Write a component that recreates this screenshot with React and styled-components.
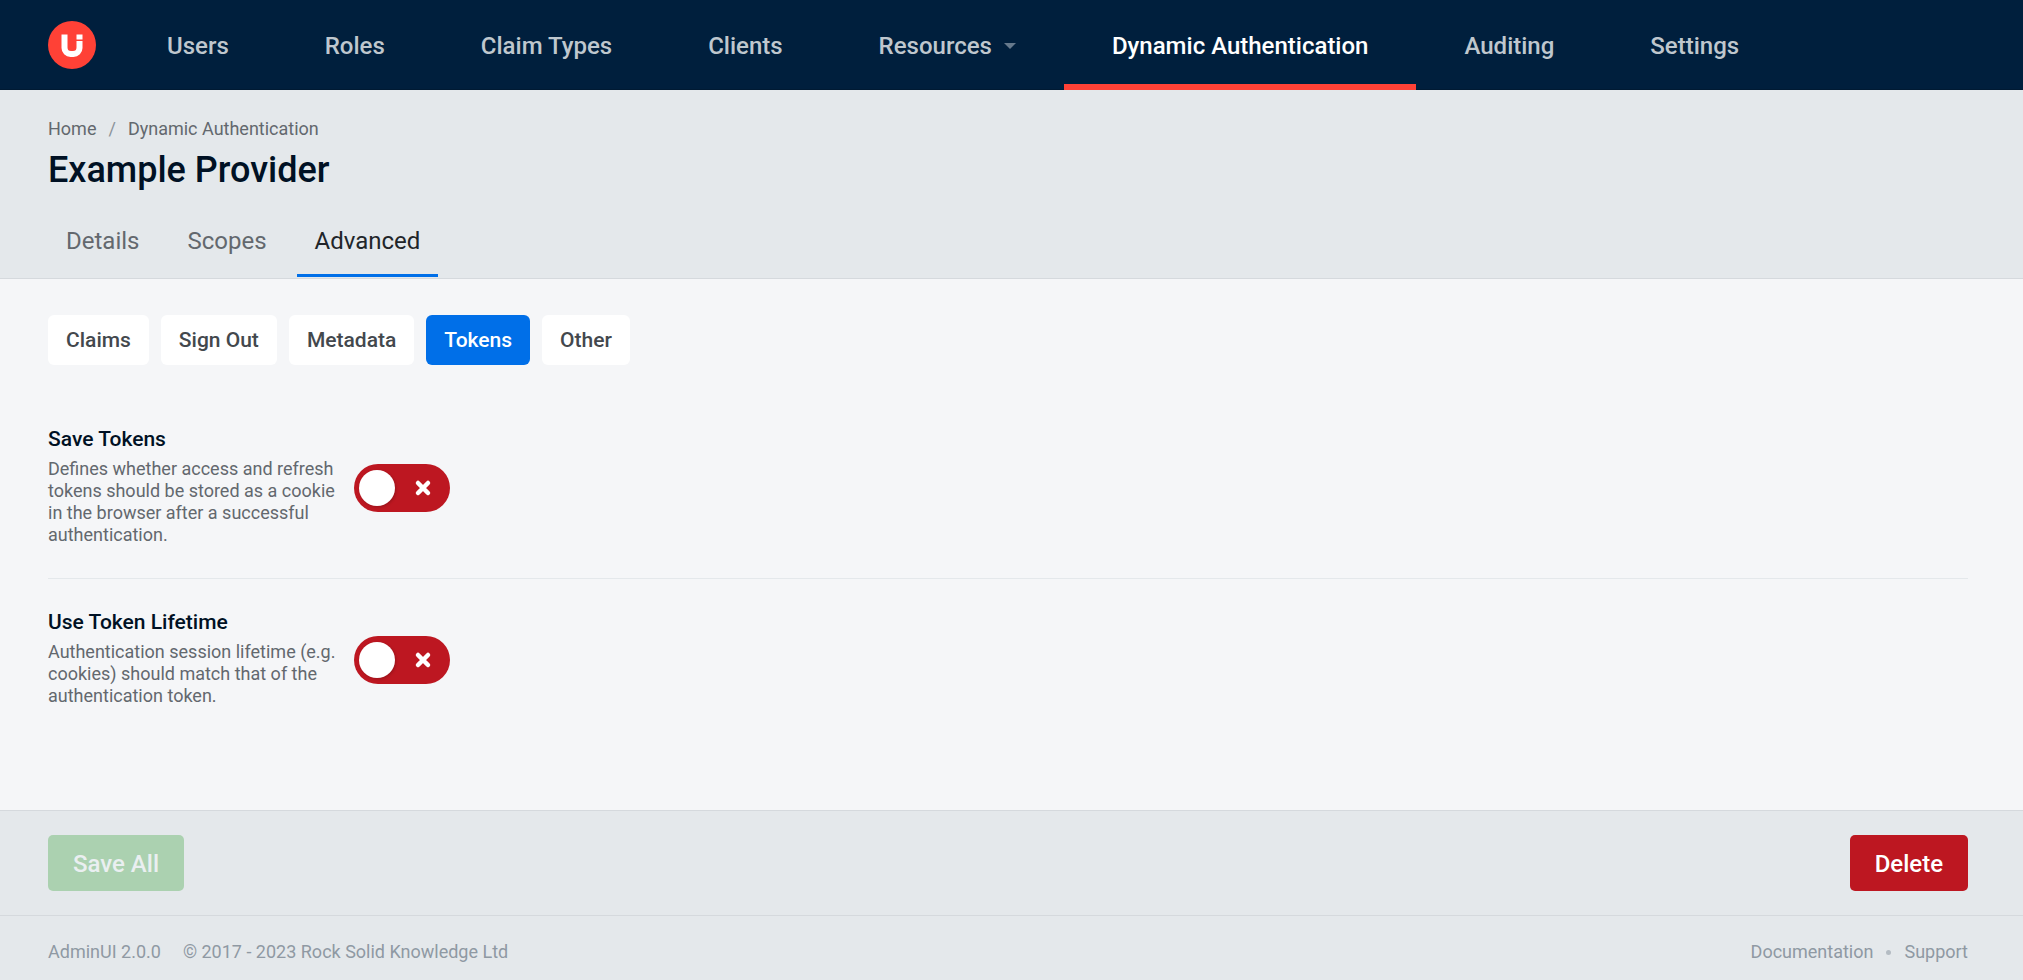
import React, { useState } from 'react';
import styled, { createGlobalStyle } from 'styled-components';

const GlobalStyle = createGlobalStyle`
  *, *::before, *::after { box-sizing: border-box; }
  body {
    margin: 0;
    font-family: Roboto, "Liberation Sans", sans-serif;
    background: #f5f6f8;
    color: #001124;
  }
  button { font-family: inherit; border: 0; margin: 0; cursor: pointer; }
  a { text-decoration: none; }
`;

const Page = styled.div`
  min-height: 100vh;
  display: flex;
  flex-direction: column;
`;

const TopBar = styled.header`
  display: flex;
  align-items: center;
  min-height: 90px;
  padding-left: 48px;
  background: #001f3d;
  border-bottom: 1px solid #001a33;
`;

const HomeLink = styled.a`
  display: flex;
  margin-right: 23px;
`;

const MainNav = styled.nav`
  display: flex;
  align-self: stretch;
  margin-bottom: -1px;
`;

const navItem = `
  display: flex;
  align-items: center;
  gap: 12px;
  padding: 8px 48px 0;
  font-size: 24px;
  font-weight: 500;
  white-space: nowrap;
  background: none;
`;

const NavLink = styled.a`
  ${navItem}
  color: ${(p) => (p.$active ? '#fff' : '#bfc7ce')};
  border-bottom: 6px solid ${(p) => (p.$active ? '#ff4136' : 'transparent')};
`;

const NavMenuButton = styled.button`
  ${navItem}
  color: #bfc7ce;
  border-bottom: 6px solid transparent;
`;

const PageHeader = styled.div`
  padding: 27px 55px 0 48px;
  background: #e4e8eb;
  border-bottom: 1px solid #d5d9dd;
`;

const Breadcrumb = styled.nav`
  display: flex;
  gap: 12px;
  font-size: 18px;
  line-height: 24px;
  color: #8b939a;
`;

const Crumb = styled.a`
  color: #63686e;
`;

const Title = styled.h1`
  margin: 7px 0 25px;
  font-size: 36px;
  line-height: 44px;
  font-weight: 500;
`;

const TabBar = styled.nav`
  display: flex;
  gap: 12px;
`;

const Tab = styled.a`
  padding: 10px 18px 19px;
  margin-bottom: 1px;
  font-size: 24px;
  line-height: 28px;
  color: ${(p) => (p.$active ? '#212529' : '#63686e')};
  border-bottom: 3px solid ${(p) => (p.$active ? '#006fe8' : 'transparent')};
`;

const Content = styled.main`
  flex: 1;
  padding: 36px 55px 36px 48px;
`;

const PillBar = styled.div`
  display: flex;
  flex-wrap: wrap;
  gap: 12px;
  margin-bottom: 31px;
`;

const Pill = styled.button`
  padding: 12px 18px;
  border-radius: 6px;
  font-size: 21px;
  line-height: 26px;
  font-weight: 500;
  color: ${(p) => (p.$active ? '#fff' : '#43484d')};
  background: ${(p) => (p.$active ? '#006fe8' : '#fff')};
`;

const Setting = styled.section`
  display: flex;
  align-items: center;
  gap: 18px;
  padding: 30px 0 28px;
  & + & { border-top: 1px solid #e4e8eb; }
`;

const SettingText = styled.div`
  width: 288px;
  padding-bottom: 4px;
`;

const SettingLabel = styled.label`
  display: block;
  margin-bottom: 6px;
  font-size: 21px;
  line-height: 26px;
  font-weight: 500;
`;

const SettingHelp = styled.p`
  margin: 0;
  font-size: 18px;
  line-height: 22px;
  color: #63686e;
`;

const Switch = styled.span`
  display: grid;
  flex: none;
  width: 96px;
  height: 48px;
  & > * { grid-area: 1 / 1; }
`;

const SwitchInput = styled.input`
  appearance: none;
  display: flex;
  align-items: center;
  justify-content: ${(p) => (p.checked ? 'flex-end' : 'flex-start')};
  margin: 0;
  padding: 0 5px;
  border-radius: 24px;
  background: ${(p) => (p.checked ? '#28a034' : '#bd1721')};
  cursor: pointer;
  &::before {
    content: '';
    width: 36px;
    height: 36px;
    border-radius: 50%;
    background: #fff;
    box-shadow: 1px 1px 3px rgba(0, 0, 0, 0.2);
  }
`;

const SwitchMark = styled.svg`
  align-self: center;
  justify-self: ${(p) => (p.$on ? 'start' : 'end')};
  margin: 0 18px;
  pointer-events: none;
`;

const ActionBar = styled.div`
  display: flex;
  justify-content: space-between;
  padding: 24px 55px 24px 48px;
  background: #e4e8eb;
  border-top: 1px solid #d5d9dd;
`;

const ActionButton = styled.button`
  padding: 15px 25px 13px;
  border-radius: 5px;
  font-size: 24px;
  line-height: 28px;
  font-weight: 500;
  color: #fff;
  background: ${(p) => (p.$danger ? '#bd1721' : '#2a9f3a')};
  &:disabled {
    color: #eaeff1;
    background: #abd1b0;
    cursor: default;
  }
`;

const Footer = styled.footer`
  display: flex;
  justify-content: space-between;
  padding: 24px 55px 16px 48px;
  font-size: 18px;
  line-height: 24px;
  color: #8f99a3;
  background: #e4e8eb;
  border-top: 1px solid #d5d9dd;
`;

const FooterGroup = styled.div`
  display: flex;
  align-items: center;
  gap: ${(p) => p.$gap}px;
`;

const FooterLink = styled.a`
  color: inherit;
`;

const Dot = styled.span`
  width: 5px;
  height: 5px;
  border-radius: 50%;
  background: #b4bcc3;
`;

const Logo = () => (
  <svg width="48" height="48" viewBox="0 0 48 48" aria-hidden="true">
    <circle cx="24" cy="24" r="24" fill="#ff4136" />
    <path
      d="M13.5 13.5h6v13a3.5 3.5 0 0 0 3.5 3.5h2a3.5 3.5 0 0 0 3.5-3.5V20h6v7a9 9 0 0 1-9 9h-3a9 9 0 0 1-9-9z"
      fill="#fff"
    />
    <rect x="28.5" y="13.5" width="6" height="5" fill="#fff" />
  </svg>
);

const Caret = () => (
  <svg width="12" height="6" viewBox="0 0 12 6" aria-hidden="true">
    <path d="M0 0h12L6 6z" fill="#66798c" />
  </svg>
);

const navEntries = ['Users', 'Roles', 'Claim Types', 'Clients', 'Resources', 'Dynamic Authentication', 'Auditing', 'Settings'];
const tabs = ['Details', 'Scopes', 'Advanced'];
const pills = ['Claims', 'Sign Out', 'Metadata', 'Tokens', 'Other'];
const settings = [
  {
    id: 'save-tokens',
    label: 'Save Tokens',
    help: 'Defines whether access and refresh tokens should be stored as a cookie in the browser after a successful authentication.',
  },
  {
    id: 'token-lifetime',
    label: 'Use Token Lifetime',
    help: 'Authentication session lifetime (e.g. cookies) should match that of the authentication token.',
  },
];

function SettingRow({ id, label, help }) {
  const [on, setOn] = useState(false);
  return (
    <Setting>
      <SettingText>
        <SettingLabel htmlFor={id}>{label}</SettingLabel>
        <SettingHelp id={`${id}-help`}>{help}</SettingHelp>
      </SettingText>
      <Switch>
        <SwitchInput
          type="checkbox"
          id={id}
          aria-describedby={`${id}-help`}
          checked={on}
          onChange={(e) => setOn(e.target.checked)}
        />
        <SwitchMark $on={on} width="18" height="18" viewBox="0 0 18 18" aria-hidden="true">
          <path
            d={on ? 'M2 9l5 5 9-10' : 'M4 4l10 10M14 4L4 14'}
            fill="none"
            stroke="#fff"
            strokeWidth="4.5"
            strokeLinecap="round"
          />
        </SwitchMark>
      </Switch>
    </Setting>
  );
}

export default function App() {
  const [pill, setPill] = useState('Tokens');
  return (
    <Page>
      <GlobalStyle />
      <TopBar>
        <HomeLink href="#" aria-label="AdminUI home"><Logo /></HomeLink>
        <MainNav aria-label="Main">
          {navEntries.map((name) =>
            name === 'Resources' ? (
              <NavMenuButton key={name} type="button" aria-haspopup="menu">{name}<Caret /></NavMenuButton>
            ) : (
              <NavLink key={name} href="#" $active={name === 'Dynamic Authentication'}>{name}</NavLink>
            )
          )}
        </MainNav>
      </TopBar>
      <PageHeader>
        <Breadcrumb aria-label="Breadcrumb">
          <Crumb href="#">Home</Crumb>
          <span>/</span>
          <Crumb href="#">Dynamic Authentication</Crumb>
        </Breadcrumb>
        <Title>Example Provider</Title>
        <TabBar aria-label="Provider">
          {tabs.map((name) => (
            <Tab key={name} href="#" $active={name === 'Advanced'}>{name}</Tab>
          ))}
        </TabBar>
      </PageHeader>
      <Content>
        <PillBar>
          {pills.map((name) => (
            <Pill key={name} type="button" $active={name === pill} onClick={() => setPill(name)}>{name}</Pill>
          ))}
        </PillBar>
        {settings.map((s) => <SettingRow key={s.id} {...s} />)}
      </Content>
      <ActionBar>
        <ActionButton type="button" disabled>Save All</ActionButton>
        <ActionButton type="button" $danger>Delete</ActionButton>
      </ActionBar>
      <Footer>
        <FooterGroup $gap={22}>
          <span>AdminUI 2.0.0</span>
          <span>© 2017 - 2023 Rock Solid Knowledge Ltd</span>
        </FooterGroup>
        <FooterGroup $gap={13}>
          <FooterLink href="#">Documentation</FooterLink>
          <Dot />
          <FooterLink href="#">Support</FooterLink>
        </FooterGroup>
      </Footer>
    </Page>
  );
}
